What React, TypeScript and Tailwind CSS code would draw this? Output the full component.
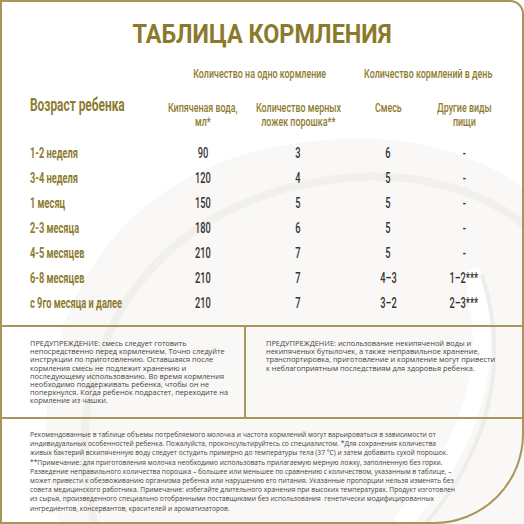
import React from 'react';

const rows = [
  ['1-2 неделя', '90', '3', '6', '-'],
  ['3-4 неделя', '120', '4', '5', '-'],
  ['1 месяц', '150', '5', '5', '-'],
  ['2-3 месяца', '180', '6', '5', '-'],
  ['4-5 месяцев', '210', '7', '5', '-'],
  ['6-8 месяцев', '210', '7', '4–3', '1–2***'],
  ['с 9го месяца и далее', '210', '7', '3–2', '2–3***'],
];

const warnLeft = [
  'ПРЕДУПРЕЖДЕНИЕ: смесь следует готовить',
  'непосредственно перед кормлением. Точно следуйте',
  'инструкции по приготовлению. Оставшаяся после',
  'кормления смесь не подлежит хранению и',
  'последующему использованию. Во время кормления',
  'необходимо поддерживать ребенка, чтобы он не',
  'поперхнулся. Когда ребенок подрастет, переходите на',
  'кормление из чашки.',
];

const warnRight = [
  'ПРЕДУПРЕЖДЕНИЕ: использование некипяченой воды и',
  'некипяченых бутылочек, а также неправильное хранение,',
  'транспортировка, приготовление и кормление могут привести',
  'к неблагоприятным последствиям для здоровья ребенка.',
];

const footer = [
  'Рекомендованные в таблице объемы потребляемого молочка и частота кормлений могут варьироваться в зависимости от',
  'индивидуальных особенностей ребенка. Пожалуйста, проконсультируйтесь со специалистом. *Для сохранения количества',
  'живых бактерий вскипяченную воду следует остудить примерно до температуры тела (37 °С) и затем добавить сухой порошок.',
  '**Примечание: для приготовления молочка необходимо использовать прилагаемую мерную ложку, заполненную без горки.',
  'Разведение неправильного количества порошка – большее или меньшее по сравнению с количеством, указанным в таблице, –',
  'может привести к обезвоживанию организма ребенка или нарушению его питания. Указанные пропорции нельзя изменять без',
  'совета медицинского работника. Примечание: избегайте длительного хранения при высоких температурах. Продукт изготовлен',
  'из сырья, произведенного специально отобранными поставщиками без использования  генетически модифицированных',
  'ингредиентов, консервантов, красителей и ароматизаторов.',
];

const cols = 'grid grid-cols-[128px_90px_100px_80px_72px]';

// condensed look: Roboto squeezed horizontally
function N({ children, left }: { children: React.ReactNode; left?: boolean }) {
  return (
    <span className={`inline-block whitespace-nowrap scale-x-[0.66] ${left ? 'origin-left' : 'origin-center'}`}>
      {children}
    </span>
  );
}

const body = "font-['Open_Sans','Noto_Sans',sans-serif]";

export default function App() {
  return (
    <div className="relative h-[524px] w-[524px] overflow-hidden bg-white">
      <svg className="absolute inset-0" width="524" height="524" viewBox="0 0 524 524">
        <path d="M60 524 C 20 400 60 200 260 150 C 400 118 490 160 524 190 L524 524 Z" fill="#f9f8f6" />
        <path d="M95 524 C 60 400 110 230 300 185 C 410 160 490 195 524 225" fill="none" stroke="#f1f0ec" strokeWidth="8" />
        <path d="M400 524 C 470 450 500 360 470 270" fill="none" stroke="#ffffff" strokeWidth="18" />
        <path d="M425 524 C 490 450 510 360 482 275" fill="none" stroke="#eeede9" strokeWidth="4" />
      </svg>
      <div className="relative flex h-full flex-col rounded-tr-[14px] rounded-br-[90px] border-2 border-[#a8955a]">
        <h1 className="mt-[18px] text-center font-['Roboto',sans-serif] text-[26px] font-bold leading-[28px] text-[#8b7a2b]">
          <span className="inline-block scale-x-[0.9]">ТАБЛИЦА КОРМЛЕНИЯ</span>
        </h1>

        <div className="mt-[18px] pl-[28px] font-['Roboto',sans-serif]">
          <div className="grid grid-cols-[128px_190px_152px] text-[13.5px] font-medium leading-[14px] text-[#8d7c30]">
            <div />
            <div className="flex justify-center pl-[14px]"><N>Количество на одно кормление</N></div>
            <div className="flex justify-center pl-[8px]"><N>Количество кормлений в день</N></div>
          </div>

          <div className={`${cols} mt-[20px] items-start text-[13.5px] font-medium leading-[14px] text-[#8d7c30]`}>
            <div className="-mt-[4px] text-[18px] font-bold leading-[18px]"><N left>Возраст ребенка</N></div>
            <div className="flex flex-col items-center"><N>Кипяченая вода,</N><N>мл*</N></div>
            <div className="flex flex-col items-center"><N>Количество мерных</N><N>ложек порошка**</N></div>
            <div className="flex flex-col items-center"><N>Смесь</N></div>
            <div className="flex flex-col items-center"><N>Другие виды</N><N>пищи</N></div>
          </div>

          <div className="mt-[12px] flex flex-col">
            {rows.map((r) => (
              <div key={r[0]} className={`${cols} h-[25px] items-center text-[14px] font-medium leading-[16px]`}>
                <div className="font-bold text-[#8d7c30]"><N left>{r[0]}</N></div>
                <div className="flex justify-center text-[#333]"><N>{r[1]}</N></div>
                <div className="flex justify-center text-[#333]"><N>{r[2]}</N></div>
                <div className="flex justify-center text-[#333]"><N>{r[3]}</N></div>
                <div className="flex justify-center text-[#333]"><N>{r[4]}</N></div>
              </div>
            ))}
          </div>
        </div>

        <div className={`${body} mt-[10px] grid h-[94px] grid-cols-[244px_1fr] border-y-2 border-[#a8955a] text-[7.4px] font-medium leading-[8.2px] text-[#444]`}>
          <div className="border-r-2 border-[#a8955a] pl-[28px] pt-[12px]">
            {warnLeft.map((l) => (
              <div key={l} className="whitespace-nowrap">{l}</div>
            ))}
          </div>
          <div className="pl-[20px] pt-[12px]">
            {warnRight.map((l) => (
              <div key={l} className="whitespace-nowrap">{l}</div>
            ))}
          </div>
        </div>

        <div className={`${body} pl-[28px] pt-[11px] text-[6.7px] font-medium leading-[9.2px] text-[#444]`}>
          {footer.map((l) => (
            <div key={l} className="whitespace-pre">{l}</div>
          ))}
        </div>
      </div>
    </div>
  );
}
